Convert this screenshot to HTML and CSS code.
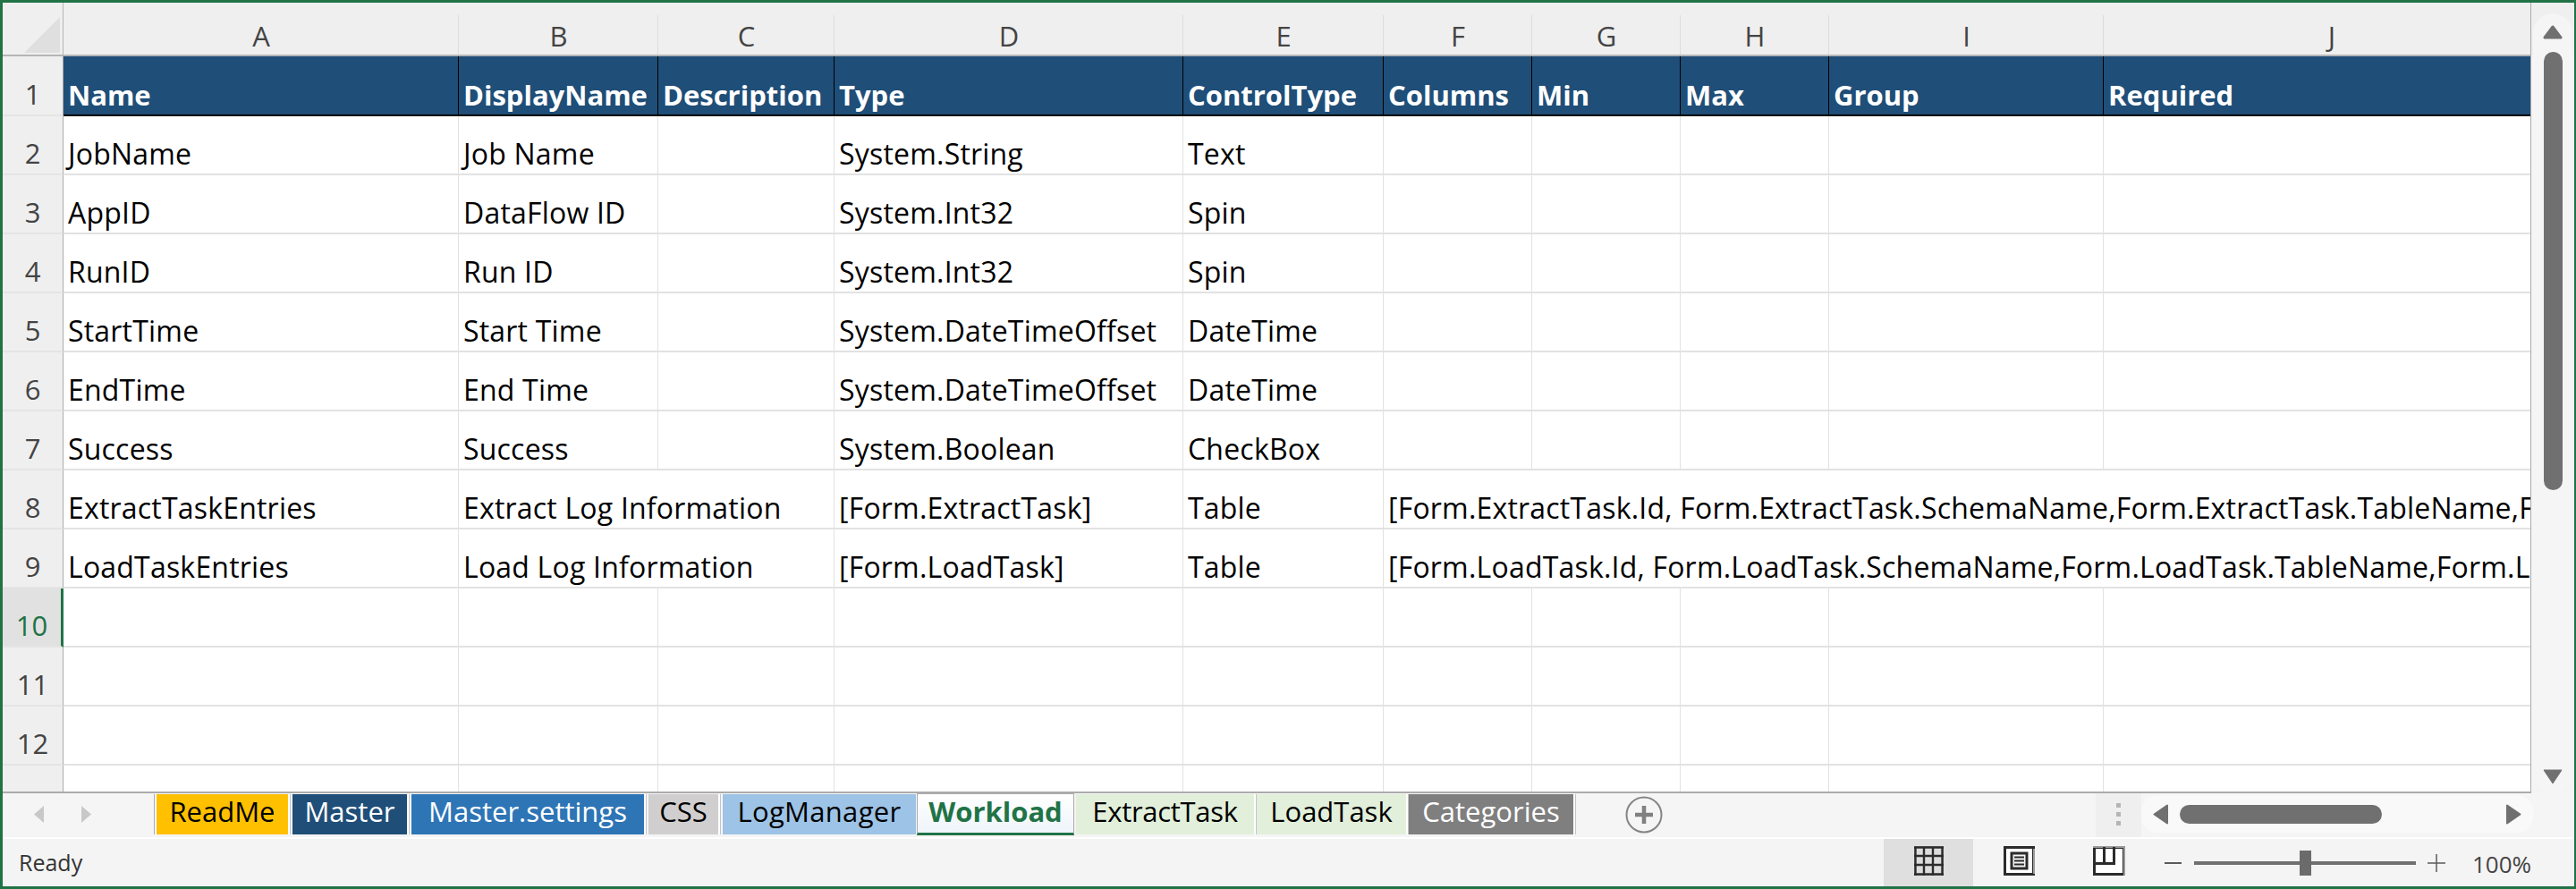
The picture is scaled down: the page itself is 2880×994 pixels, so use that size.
FILE: index.html
```html
<!DOCTYPE html>
<html lang="en">
<head>
<meta charset="utf-8">
<title>Workload</title>
<link rel="stylesheet" href="styles.css">
</head>
<body>
<div class="window">
  <div class="main">
    <div class="sheet">
      <div class="corner"><svg width="40" height="40" viewBox="0 0 40 40"><polygon points="40,0 40,40 0,40" fill="#dfdfdf"/></svg></div>
      <div class="ch">A</div><div class="ch">B</div><div class="ch">C</div><div class="ch">D</div><div class="ch">E</div><div class="ch">F</div><div class="ch">G</div><div class="ch">H</div><div class="ch">I</div><div class="ch">J</div>

      <div class="rh first">1</div>
      <div class="th">Name</div><div class="th">DisplayName</div><div class="th">Description</div><div class="th">Type</div><div class="th">ControlType</div><div class="th">Columns</div><div class="th">Min</div><div class="th">Max</div><div class="th">Group</div><div class="th last">Required</div>

      <div class="rh">2</div>
      <div class="c">JobName</div><div class="c">Job Name</div><div class="c"></div><div class="c">System.String</div><div class="c">Text</div><div class="c"></div><div class="c"></div><div class="c"></div><div class="c"></div><div class="c"></div>

      <div class="rh">3</div>
      <div class="c">AppID</div><div class="c">DataFlow ID</div><div class="c"></div><div class="c">System.Int32</div><div class="c">Spin</div><div class="c"></div><div class="c"></div><div class="c"></div><div class="c"></div><div class="c"></div>

      <div class="rh">4</div>
      <div class="c">RunID</div><div class="c">Run ID</div><div class="c"></div><div class="c">System.Int32</div><div class="c">Spin</div><div class="c"></div><div class="c"></div><div class="c"></div><div class="c"></div><div class="c"></div>

      <div class="rh">5</div>
      <div class="c">StartTime</div><div class="c">Start Time</div><div class="c"></div><div class="c">System.DateTimeOffset</div><div class="c">DateTime</div><div class="c"></div><div class="c"></div><div class="c"></div><div class="c"></div><div class="c"></div>

      <div class="rh">6</div>
      <div class="c">EndTime</div><div class="c">End Time</div><div class="c"></div><div class="c">System.DateTimeOffset</div><div class="c">DateTime</div><div class="c"></div><div class="c"></div><div class="c"></div><div class="c"></div><div class="c"></div>

      <div class="rh">7</div>
      <div class="c">Success</div><div class="c">Success</div><div class="c"></div><div class="c">System.Boolean</div><div class="c">CheckBox</div><div class="c"></div><div class="c"></div><div class="c"></div><div class="c"></div><div class="c"></div>

      <div class="rh">8</div>
      <div class="c">ExtractTaskEntries</div><div class="c span2">Extract Log Information</div><div class="c">[Form.ExtractTask]</div><div class="c">Table</div><div class="c span5">[Form.ExtractTask.Id, Form.ExtractTask.SchemaName,Form.ExtractTask.TableName,Form</div>

      <div class="rh">9</div>
      <div class="c">LoadTaskEntries</div><div class="c span2">Load Log Information</div><div class="c">[Form.LoadTask]</div><div class="c">Table</div><div class="c span5">[Form.LoadTask.Id, Form.LoadTask.SchemaName,Form.LoadTask.TableName,Form.LoadTask</div>

      <div class="rh selected">10</div>
      <div class="c"></div><div class="c"></div><div class="c"></div><div class="c"></div><div class="c"></div><div class="c"></div><div class="c"></div><div class="c"></div><div class="c"></div><div class="c"></div>

      <div class="rh">11</div>
      <div class="c"></div><div class="c"></div><div class="c"></div><div class="c"></div><div class="c"></div><div class="c"></div><div class="c"></div><div class="c"></div><div class="c"></div><div class="c"></div>

      <div class="rh">12</div>
      <div class="c"></div><div class="c"></div><div class="c"></div><div class="c"></div><div class="c"></div><div class="c"></div><div class="c"></div><div class="c"></div><div class="c"></div><div class="c"></div>

      <div class="rh"></div>
      <div class="c"></div><div class="c"></div><div class="c"></div><div class="c"></div><div class="c"></div><div class="c"></div><div class="c"></div><div class="c"></div><div class="c"></div><div class="c"></div>
    </div>
    <div class="vscroll">
      <div class="vtrack">
        <svg class="varrow up" width="22" height="16" viewBox="0 0 22 16"><polygon points="11,2 20,14 2,14" fill="#707070" stroke="#707070" stroke-width="3" stroke-linejoin="round"/></svg>
        <div class="vthumb"></div>
        <svg class="varrow down" width="22" height="17" viewBox="0 0 22 17"><polygon points="1,1 21,1 11,16" fill="#707070" stroke="#707070" stroke-width="1" stroke-linejoin="round"/></svg>
      </div>
    </div>
  </div>

  <div class="tabbar">
    <div class="nav">
      <svg width="11" height="19" viewBox="0 0 11 19"><polygon points="11,0 11,19 0,9.5" fill="#c8c8c8"/></svg>
      <svg width="11" height="19" viewBox="0 0 11 19"><polygon points="0,0 0,19 11,9.5" fill="#c8c8c8"/></svg>
    </div>
    <div class="tabs">
      <div class="tab t-readme">ReadMe</div>
      <div class="tab t-master">Master</div>
      <div class="tab t-settings">Master.settings</div>
      <div class="tab t-css">CSS</div>
      <div class="tab t-log">LogManager</div>
      <div class="tab t-active">Workload</div>
      <div class="tab t-extract">ExtractTask</div>
      <div class="tab t-load">LoadTask</div>
      <div class="tab t-cat">Categories</div>
    </div>
    <svg class="addsheet" width="42" height="42" viewBox="0 0 42 42"><circle cx="21" cy="21" r="19.5" fill="none" stroke="#858585" stroke-width="2"/><path d="M21 11v20M11 21h20" stroke="#808080" stroke-width="4.5" fill="none"/></svg>
    <div class="splitter"><i></i><i></i><i></i></div>
    <div class="htrack">
      <svg width="17" height="23" viewBox="0 0 17 23"><polygon points="16,1.5 16,21.5 1.5,11.5" fill="#707070" stroke="#707070" stroke-width="2" stroke-linejoin="round"/></svg>
      <div class="hthumb"></div>
      <svg width="17" height="23" viewBox="0 0 17 23"><polygon points="1,1.5 1,21.5 15.5,11.5" fill="#707070" stroke="#707070" stroke-width="2" stroke-linejoin="round"/></svg>
    </div>
  </div>

  <div class="status">
    <div class="ready">Ready</div>
    <div class="view active-view">
      <svg width="33" height="33" viewBox="0 0 33 33">
        <rect x="0" y="0" width="33" height="33" fill="#9a9a9a"/>
        <rect x="2" y="2" width="8" height="8" fill="#dcdcdc"/><rect x="12" y="2" width="8" height="8" fill="#dcdcdc"/><rect x="22" y="2" width="9" height="8" fill="#dcdcdc"/>
        <rect x="2" y="12" width="8" height="8" fill="#dcdcdc"/><rect x="12" y="12" width="8" height="8" fill="#dcdcdc"/><rect x="22" y="12" width="9" height="8" fill="#dcdcdc"/>
        <rect x="2" y="22" width="8" height="9" fill="#dcdcdc"/><rect x="12" y="22" width="8" height="9" fill="#dcdcdc"/><rect x="22" y="22" width="9" height="9" fill="#dcdcdc"/>
        <path d="M1.5 1v32M11 1v32M21 1v32M31.5 1v32M0 1.5h33M0 11h33M0 21h33M0 31.5h33" stroke="#2b2b2b" stroke-width="2.4" fill="none"/>
      </svg>
    </div>
    <div class="view">
      <svg width="35" height="33" viewBox="0 0 35 33">
        <rect x="1.5" y="1.5" width="32" height="30" fill="#fff" stroke="#2b2b2b" stroke-width="3"/>
        <path d="M34 3v28" stroke="#9a9a9a" stroke-width="2" fill="none"/>
        <rect x="9" y="8" width="17" height="17" fill="#f4f4f4" stroke="#2b2b2b" stroke-width="3"/>
        <path d="M12 12.5h11M12 16.5h11M12 20.5h11" stroke="#2b2b2b" stroke-width="2" fill="none"/>
      </svg>
    </div>
    <div class="view">
      <svg width="36" height="33" viewBox="0 0 36 33">
        <rect x="1.5" y="1.5" width="33" height="30" fill="#fff" stroke="#2b2b2b" stroke-width="3"/>
        <path d="M0 1h36M35 1v32" stroke="#9a9a9a" stroke-width="2" fill="none"/>
        <path d="M1 19.5h22.5V1M12.5 1v18" stroke="#2b2b2b" stroke-width="3" fill="none"/>
      </svg>
    </div>
    <div class="zoom">
      <span class="zminus"></span>
      <div class="ztrack"><span class="zthumb"></span></div>
      <svg class="zplus" width="20" height="20" viewBox="0 0 20 20"><path d="M10 0v20M0 10h20" stroke="#5a5a5a" stroke-width="1.5" fill="none"/></svg>
      <span class="zpct">100%</span>
    </div>
  </div>
</div>
</body>
</html>
```

FILE: styles.css
```css
* { box-sizing: border-box; }
html, body { margin: 0; padding: 0; }
body { font-family: "Open Sans", "Liberation Sans", sans-serif; background: #fff; }

.window {
  width: 2880px;
  height: 994px;
  display: flex;
  flex-direction: column;
  border: solid #217346;
  border-width: 3px 2px 3px 3px;
  overflow: hidden;
}

.main { display: flex; height: 884px; background: #f4f4f4; }

.sheet {
  width: 2827px;
  flex: none;
  height: 884px;
  overflow: hidden;
  display: grid;
  grid-template-columns: 68px 442px 223px 197px 390px 224px 166px 166px 166px 307px 510px;
  grid-template-rows: 60px 67px repeat(12, 66px);
  background: #fff;
  border-bottom: 2px solid #ababab;
  border-right: 1px solid #ababab;
  font-size: 32px;
  letter-spacing: 0.2px;
  color: #000;
}

.corner {
  background: #efefef;
  border-bottom: 2px solid #b5b5b5;
  border-right: 1px solid #b5b5b5;
  padding: 16px 0 0 24px;
}
.corner svg { display: block; }

.ch {
  background: linear-gradient(#efefef 14px, #dcdcdc 14px);
  background-size: 1px 100%;
  background-repeat: no-repeat;
  background-position: right top;
  background-color: #efefef;
  border-bottom: 2px solid #b5b5b5;
  color: #444;
  font-size: 31px;
  letter-spacing: 0;
  display: flex;
  align-items: flex-end;
  justify-content: center;
}

.rh {
  background: #efefef;
  border-right: 1px solid #ababab;
  border-bottom: 2px solid #e4e4e4;
  color: #444;
  font-size: 31px;
  letter-spacing: 0;
  display: flex;
  align-items: flex-end;
  justify-content: center;
  padding-bottom: 2px;
}
.rh.selected {
  background: #e1e1e1;
  color: #217346;
  border-right: 3px solid #217346;
}

.th, .c {
  display: flex;
  align-items: flex-end;
  padding: 0 0 1px 5px;
  white-space: nowrap;
  overflow: hidden;
}
.th {
  background: #1f4e78;
  color: #fff;
  font-size: 31px;
  font-weight: 700;
  letter-spacing: 0;
  border-right: 1px solid #000;
  border-bottom: 2px solid #000;
}
.th.last { border-right: 0; }
.c {
  border-right: 1px solid #e2e2e2;
  border-bottom: 2px solid #e2e2e2;
}
.span2 { grid-column: span 2; }
.span5 { grid-column: span 5; border-right: 0; }

.vscroll {
  flex: none;
  width: 48px;
  padding: 12px 2px 0;
  background: linear-gradient(#efefef 59px, #f4f4f4 59px);
}
.vtrack {
  height: 100%;
  background: #f5f5f5;
  border-radius: 22px;
  display: flex;
  flex-direction: column;
  align-items: center;
}
.varrow { display: block; flex: none; }
.varrow.up { margin-top: 13px; }
.vthumb {
  width: 21px;
  height: 490px;
  margin-top: 14px;
  background: #707070;
  border-radius: 11px;
}
.varrow.down { margin-top: auto; margin-bottom: 10px; }

.tabbar {
  flex: none;
  height: 49px;
  display: flex;
  background: #f5f5f5;
}
.nav {
  flex: none;
  width: 172px;
  display: flex;
  gap: 42px;
  padding: 14px 0 0 35px;
  align-items: flex-start;
}
.nav svg { display: block; }
.tabs {
  display: flex;
  gap: 5px;
  height: 46px;
  padding-top: 1px;
}
.tab {
  height: 45px;
  font-size: 31px;
  line-height: 39px;
  text-align: center;
  white-space: nowrap;
  flex: none;
  box-shadow: 2px 0 0 #fff, 3px 0 0 #c4c4c4, 5px 0 0 #f5f5f5;
}
.t-readme { width: 147px; background: #ffc000; color: #000; box-shadow: -2px 0 0 #fff, -3px 0 0 #ababab, 2px 0 0 #fff, 3px 0 0 #c4c4c4; }
.t-master { width: 128px; background: #1f4e78; color: #fff; }
.t-settings { width: 260px; background: #2e75b6; color: #fff; }
.t-css { width: 78px; background: #d0cece; color: #000; }
.t-log { width: 216px; background: #9dc3e6; color: #000; margin-right: -4px; box-shadow: none; letter-spacing: 0.3px; }
.t-active {
  width: 176px;
  height: 48px;
  margin: -2px -3px 0 0;
  background: linear-gradient(#fff, #eef4fb);
  color: #217346;
  font-weight: 700;
  border: solid #ababab;
  border-width: 2px 1px 0;
  border-bottom: 3px solid #217346;
  line-height: 39px;
  box-shadow: none;
  position: relative;
  z-index: 1;
}
.t-extract { width: 199px; background: #e2efda; color: #000; margin-right: -2px; letter-spacing: -0.3px; }
.t-load { width: 167px; background: #e2efda; color: #000; margin-right: -2px; }
.t-cat { width: 184px; background: #7f7f7f; color: #fff; }

.addsheet { flex: none; display: block; margin: 3px 0 0 58px; }

.splitter {
  flex: none;
  width: 51px;
  margin-left: 484px;
  background: #efefef;
  display: flex;
  flex-direction: column;
  align-items: center;
  gap: 5px;
  padding-top: 11px;
}
.splitter i { display: block; width: 5px; height: 5px; background: #b5b5b5; }

.htrack {
  flex: none;
  width: 438px;
  height: 42px;
  margin-top: 2px;
  background: #f9f9f9;
  border-radius: 18px;
  display: flex;
  align-items: center;
  padding: 0 13px;
}
.htrack svg { display: block; flex: none; }
.hthumb {
  width: 226px;
  height: 21px;
  margin-left: 13px;
  margin-right: auto;
  background: #707070;
  border-radius: 11px;
}

.status {
  flex: none;
  height: 53px;
  margin-top: 2px;
  background: #f4f4f4;
  display: flex;
  color: #444;
}
.ready {
  font-size: 25px;
  color: #333;
  padding: 9px 0 0 18px;
  width: 2103px;
  flex: none;
}
.view {
  flex: none;
  width: 100px;
  padding-top: 8px;
  display: flex;
  justify-content: center;
  align-items: flex-start;
  margin-right: 1px;
}
.view svg { display: block; }
.active-view { background: #dfdfdf; }
.zoom {
  flex: none;
  display: flex;
  align-items: center;
  margin-left: 11px;
  height: 53px;
}
.zminus { display: block; width: 19px; height: 2px; background: #5a5a5a; }
.ztrack {
  position: relative;
  width: 248px;
  height: 4px;
  margin-left: 14px;
  background: #707070;
}
.zthumb {
  position: absolute;
  left: 118px;
  top: -12px;
  width: 13px;
  height: 28px;
  background: #6b6b6b;
}
.zplus { display: block; margin-left: 13px; }
.zpct {
  font-size: 26px;
  color: #444;
  margin-left: 30px;
  padding-top: 2px;
}
```
